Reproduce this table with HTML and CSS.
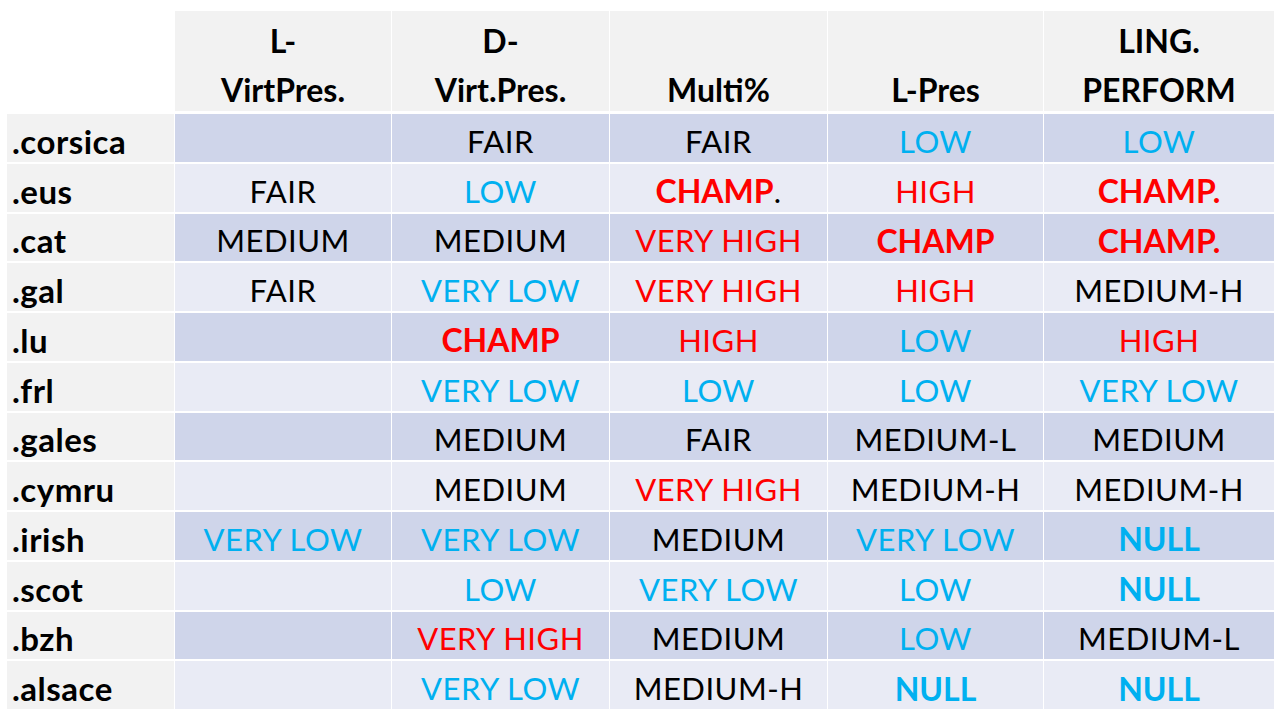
FILE: index.html
```html
<!DOCTYPE html>
<html>
<head>
<meta charset="utf-8">
<link rel="stylesheet" href="styles.css">
</head>
<body>
<div class="table">
  <div class="corner"></div>
  <div class="head"><span>L-<br>VirtPres.</span></div>
  <div class="head"><span>D-<br>Virt.Pres.</span></div>
  <div class="head"><span>Multi%</span></div>
  <div class="head"><span>L-Pres</span></div>
  <div class="head"><span>LING.<br>PERFORM</span></div>

  <div class="name">.corsica</div>
  <div class="cell odd"></div>
  <div class="cell odd">FAIR</div>
  <div class="cell odd">FAIR</div>
  <div class="cell odd blue">LOW</div>
  <div class="cell odd blue">LOW</div>

  <div class="name">.eus</div>
  <div class="cell even">FAIR</div>
  <div class="cell even blue">LOW</div>
  <div class="cell even"><span class="red bold">CHAMP</span>.</div>
  <div class="cell even red">HIGH</div>
  <div class="cell even red bold">CHAMP.</div>

  <div class="name">.cat</div>
  <div class="cell odd">MEDIUM</div>
  <div class="cell odd">MEDIUM</div>
  <div class="cell odd red">VERY HIGH</div>
  <div class="cell odd red bold">CHAMP</div>
  <div class="cell odd red bold">CHAMP.</div>

  <div class="name">.gal</div>
  <div class="cell even">FAIR</div>
  <div class="cell even blue">VERY LOW</div>
  <div class="cell even red">VERY HIGH</div>
  <div class="cell even red">HIGH</div>
  <div class="cell even">MEDIUM-H</div>

  <div class="name">.lu</div>
  <div class="cell odd"></div>
  <div class="cell odd red bold">CHAMP</div>
  <div class="cell odd red">HIGH</div>
  <div class="cell odd blue">LOW</div>
  <div class="cell odd red">HIGH</div>

  <div class="name">.frl</div>
  <div class="cell even"></div>
  <div class="cell even blue">VERY LOW</div>
  <div class="cell even blue">LOW</div>
  <div class="cell even blue">LOW</div>
  <div class="cell even blue">VERY LOW</div>

  <div class="name">.gales</div>
  <div class="cell odd"></div>
  <div class="cell odd">MEDIUM</div>
  <div class="cell odd">FAIR</div>
  <div class="cell odd">MEDIUM-L</div>
  <div class="cell odd">MEDIUM</div>

  <div class="name">.cymru</div>
  <div class="cell even"></div>
  <div class="cell even">MEDIUM</div>
  <div class="cell even red">VERY HIGH</div>
  <div class="cell even">MEDIUM-H</div>
  <div class="cell even">MEDIUM-H</div>

  <div class="name">.irish</div>
  <div class="cell odd blue">VERY LOW</div>
  <div class="cell odd blue">VERY LOW</div>
  <div class="cell odd">MEDIUM</div>
  <div class="cell odd blue">VERY LOW</div>
  <div class="cell odd blue bold">NULL</div>

  <div class="name">.scot</div>
  <div class="cell even"></div>
  <div class="cell even blue">LOW</div>
  <div class="cell even blue">VERY LOW</div>
  <div class="cell even blue">LOW</div>
  <div class="cell even blue bold">NULL</div>

  <div class="name">.bzh</div>
  <div class="cell odd"></div>
  <div class="cell odd red">VERY HIGH</div>
  <div class="cell odd">MEDIUM</div>
  <div class="cell odd blue">LOW</div>
  <div class="cell odd">MEDIUM-L</div>

  <div class="name">.alsace</div>
  <div class="cell even"></div>
  <div class="cell even blue">VERY LOW</div>
  <div class="cell even">MEDIUM-H</div>
  <div class="cell even blue bold">NULL</div>
  <div class="cell even blue bold">NULL</div>
</div>
</body>
</html>
```
FILE: styles.css
```css
html, body {
  margin: 0;
  padding: 0;
  background: #ffffff;
}
body {
  width: 1280px;
  height: 720px;
  overflow: hidden;
  font-family: Lato, "Open Sans", sans-serif;
  color: #000000;
}
.table {
  display: grid;
  grid-template-columns: 167px 216px 217px 217px 215px 230px;
  grid-template-rows: 101px repeat(12, 47.75px);
  column-gap: 1px;
  row-gap: 2px;
  padding: 11px 0 0 7px;
}
.corner {
  background: #ffffff;
}
.head {
  background: #f2f2f2;
  margin-bottom: 1px;
  font-weight: 700;
  font-size: 32px;
  line-height: 49px;
  text-align: center;
  display: flex;
  align-items: flex-end;
  justify-content: center;
}
.head span {
  margin-bottom: -3px;
}
.name {
  background: #f2f2f2;
  font-weight: 700;
  font-size: 33px;
  letter-spacing: 0.5px;
  display: flex;
  align-items: center;
  padding: 6px 0 0 5px;
}
.cell {
  font-size: 31px;
  letter-spacing: 0.5px;
  display: flex;
  align-items: center;
  justify-content: center;
  padding-top: 6px;
  white-space: nowrap;
}
.odd { background: #cfd5ea; }
.even { background: #e9ebf5; }
.blue { color: #00b0f0; }
.red { color: #ff0000; }
.bold { font-weight: 700; font-size: 32px; letter-spacing: 0; }
```
